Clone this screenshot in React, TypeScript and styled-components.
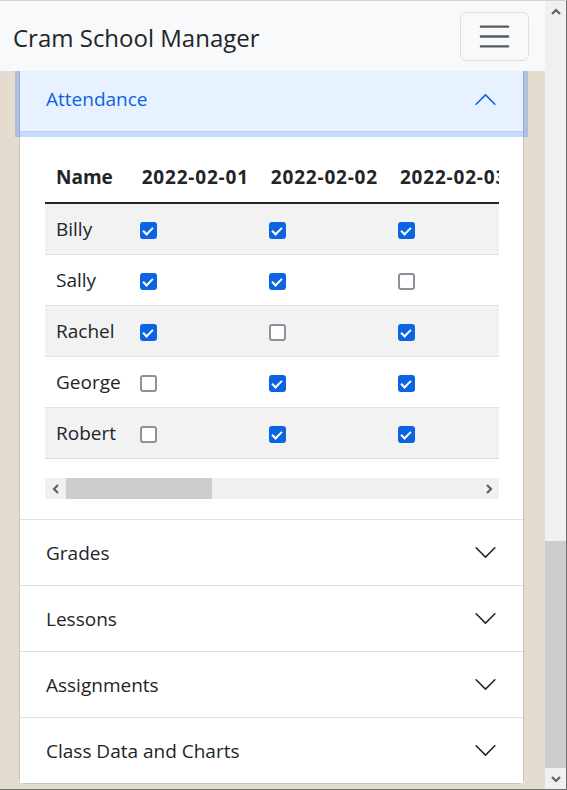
import React from "react";
import styled, { createGlobalStyle } from "styled-components";

const students = ["Billy", "Sally", "Rachel", "George", "Robert"];

const dates = [
  "2022-02-01",
  "2022-02-02",
  "2022-02-03",
  "2022-02-04",
  "2022-02-05",
  "2022-02-06",
  "2022-02-07",
  "2022-02-08",
  "2022-02-09",
];

// attendance[student][dateIndex]
const attendance: Record<string, boolean[]> = {
  Billy: [true, true, true, true, false, true, true, true, true],
  Sally: [true, true, false, true, true, true, false, true, true],
  Rachel: [true, false, true, true, true, false, true, true, false],
  George: [false, true, true, false, true, true, true, false, true],
  Robert: [false, true, true, true, true, true, true, true, true],
};

const sections = ["Grades", "Lessons", "Assignments", "Class Data and Charts"];

const GlobalStyle = createGlobalStyle`
  body {
    margin: 0;
    background: #e5dcd0;
    color: #212529;
    font-family: "Open Sans", "Noto Sans", sans-serif;
    font-size: 19px;
  }
`;

const Screen = styled.div`
  height: 100vh;
  box-sizing: border-box;
  display: flex;
  overflow: hidden;
  border-top: 1px solid #d2d2d2;
  border-right: 1px solid #6f6f6f;
  border-bottom: 1px solid #6f6f6f;
`;

const Page = styled.div`
  flex: 1;
  min-width: 0;
  display: flex;
  flex-direction: column;
`;

const Navbar = styled.nav`
  height: 70px;
  flex-shrink: 0;
  background: #f8f9fa;
  display: flex;
  align-items: center;
  justify-content: space-between;
  padding: 0 16px 0 13px;
`;

const Brand = styled.a`
  font-size: 24px;
  color: #212529;
  text-decoration: none;
  padding-top: 2px;
`;

const Toggler = styled.button`
  width: 69px;
  height: 49px;
  display: flex;
  align-items: center;
  justify-content: center;
  background: transparent;
  border: 1px solid rgba(0, 0, 0, 0.1);
  border-radius: 6px;
  padding: 0;
`;

// the page is scrolled to its end: content sits on the bottom edge
const Content = styled.main`
  flex: 1;
  min-height: 0;
  overflow: hidden;
  display: flex;
  flex-direction: column;
  justify-content: flex-end;
  padding: 0 21px 5px 19px;
`;

const Accordion = styled.div`
  flex-shrink: 0;
  background: #fff;
  border: 1px solid rgba(0, 0, 0, 0.24);
  border-radius: 6px;
`;

const Item = styled.div`
  & + & {
    border-top: 1px solid rgba(0, 0, 0, 0.125);
  }
`;

const HeaderButton = styled.button<{ $open?: boolean }>`
  position: relative;
  z-index: ${(p) => (p.$open ? 3 : 0)};
  width: 100%;
  height: ${(p) => (p.$open ? 66 : 65)}px;
  display: flex;
  align-items: center;
  padding: 0 25px 0 26px;
  border: 0;
  border-radius: 0;
  font-family: inherit;
  font-size: 19px;
  text-align: left;
  background: ${(p) => (p.$open ? "#e7f1ff" : "#fff")};
  color: ${(p) => (p.$open ? "#0c63e4" : "#212529")};
  box-shadow: ${(p) =>
    p.$open
      ? "inset 0 -1px 0 rgba(0,0,0,.125), 0 0 0 5px rgba(13,110,253,.25)"
      : "none"};
`;

const Chevron = styled.svg<{ $open?: boolean }>`
  width: 25px;
  height: 25px;
  margin-left: auto;
  flex-shrink: 0;
  transform: ${(p) => (p.$open ? "rotate(-180deg)" : "none")};
  fill: ${(p) => (p.$open ? "#0c63e4" : "#212529")};
`;

const Body = styled.div`
  padding: 20px 24px 20px 25px;
`;

const TableViewport = styled.div`
  overflow: hidden;
`;

const Table = styled.table`
  border-collapse: collapse;
  margin-bottom: 19px;
  white-space: nowrap;
`;

const HeadCell = styled.th<{ $date?: boolean }>`
  padding: 10px 11px;
  line-height: 30px;
  text-align: left;
  font-weight: 700;
  letter-spacing: ${(p) => (p.$date ? "0.8px" : "0")};
  border-bottom: 2px solid #212529;
`;

const Row = styled.tr<{ $striped?: boolean }>`
  background: ${(p) => (p.$striped ? "#f2f2f2" : "#fff")};
`;

const Cell = styled.td`
  padding: 10px 10px 10px 11px;
  line-height: 30px;
  border-bottom: 1px solid #dee2e6;
  vertical-align: middle;
`;

const Check = styled.input`
  appearance: none;
  display: inline-grid;
  place-items: center;
  width: 17px;
  height: 17px;
  margin: 0 0 0 -2px;
  vertical-align: middle;
  box-sizing: border-box;
  border: 2px solid #8f8f9d;
  border-radius: 3px;
  background: #fff;

  &:checked {
    border-color: #0b65e3;
    background: #0b65e3;
  }

  &:checked::after {
    content: "";
    width: 4px;
    height: 8px;
    margin-top: -2px;
    border: solid #fff;
    border-width: 0 2.5px 2.5px 0;
    transform: rotate(45deg);
  }
`;

const ScrollBar = styled.div<{ $vertical?: boolean }>`
  flex-shrink: 0;
  display: flex;
  flex-direction: ${(p) => (p.$vertical ? "column" : "row")};
  ${(p) => (p.$vertical ? "width: 21px;" : "height: 21px;")}
  background: #f0f0f0;
`;

const ScrollArrow = styled.div`
  width: 21px;
  height: 21px;
  flex-shrink: 0;
  display: flex;
  align-items: center;
  justify-content: center;
`;

const ScrollTrack = styled.div<{ $vertical?: boolean; $atEnd?: boolean }>`
  flex: 1;
  display: flex;
  flex-direction: ${(p) => (p.$vertical ? "column" : "row")};
  justify-content: ${(p) => (p.$atEnd ? "flex-end" : "flex-start")};
`;

const ScrollThumb = styled.div`
  flex-shrink: 0;
  background: #cdcdcd;
`;

const arrowPaths = {
  up: "M1 6 L5 2 L9 6",
  down: "M1 2 L5 6 L9 2",
  left: "M6 1 L2 5 L6 9",
  right: "M2 1 L6 5 L2 9",
};

function Arrow({ dir }: { dir: keyof typeof arrowPaths }) {
  const vertical = dir === "up" || dir === "down";
  return (
    <ScrollArrow>
      <svg
        width={vertical ? 10 : 8}
        height={vertical ? 8 : 10}
        viewBox={vertical ? "0 0 10 8" : "0 0 8 10"}
      >
        <path d={arrowPaths[dir]} fill="none" stroke="#606060" strokeWidth="2.2" />
      </svg>
    </ScrollArrow>
  );
}

function Scroller({
  vertical,
  ratio,
  atEnd,
}: {
  vertical?: boolean;
  ratio: number;
  atEnd?: boolean;
}) {
  const size = `${ratio * 100}%`;
  return (
    <ScrollBar $vertical={vertical}>
      <Arrow dir={vertical ? "up" : "left"} />
      <ScrollTrack $vertical={vertical} $atEnd={atEnd}>
        <ScrollThumb style={vertical ? { height: size } : { width: size }} />
      </ScrollTrack>
      <Arrow dir={vertical ? "down" : "right"} />
    </ScrollBar>
  );
}

function ChevronIcon({ open }: { open?: boolean }) {
  return (
    <Chevron $open={open} viewBox="0 0 16 16">
      <path
        fillRule="evenodd"
        d="M1.646 4.646a.5.5 0 0 1 .708 0L8 10.293l5.646-5.647a.5.5 0 0 1 .708.708l-6 6a.5.5 0 0 1-.708 0l-6-6a.5.5 0 0 1 0-.708z"
      />
    </Chevron>
  );
}

function AttendanceTable() {
  return (
    <>
      <TableViewport>
        <Table>
          <thead>
            <tr>
              <HeadCell>Name</HeadCell>
              {dates.map((d) => (
                <HeadCell key={d} $date>
                  {d}
                </HeadCell>
              ))}
            </tr>
          </thead>
          <tbody>
            {students.map((name, i) => (
              <Row key={name} $striped={i % 2 === 0}>
                <Cell>{name}</Cell>
                {attendance[name].map((present, j) => (
                  <Cell key={j}>
                    <Check type="checkbox" defaultChecked={present} />
                  </Cell>
                ))}
              </Row>
            ))}
          </tbody>
        </Table>
      </TableViewport>
      <Scroller ratio={0.355} />
    </>
  );
}

export default function App() {
  return (
    <>
      <GlobalStyle />
      <Screen>
        <Page>
          <Navbar>
            <Brand href="#">Cram School Manager</Brand>
            <Toggler aria-label="Toggle navigation">
              <svg width="37" height="37" viewBox="0 0 30 30">
                <path
                  stroke="rgba(33,37,41,.75)"
                  strokeLinecap="round"
                  strokeMiterlimit="10"
                  strokeWidth="2"
                  d="M4 7h22M4 15h22M4 23h22"
                />
              </svg>
            </Toggler>
          </Navbar>
          <Content>
            <Accordion>
              <Item>
                <HeaderButton $open>
                  Attendance
                  <ChevronIcon open />
                </HeaderButton>
                <Body>
                  <AttendanceTable />
                </Body>
              </Item>
              {sections.map((s) => (
                <Item key={s}>
                  <HeaderButton>
                    {s}
                    <ChevronIcon />
                  </HeaderButton>
                </Item>
              ))}
            </Accordion>
          </Content>
        </Page>
        <Scroller vertical ratio={0.304} atEnd />
      </Screen>
    </>
  );
}
